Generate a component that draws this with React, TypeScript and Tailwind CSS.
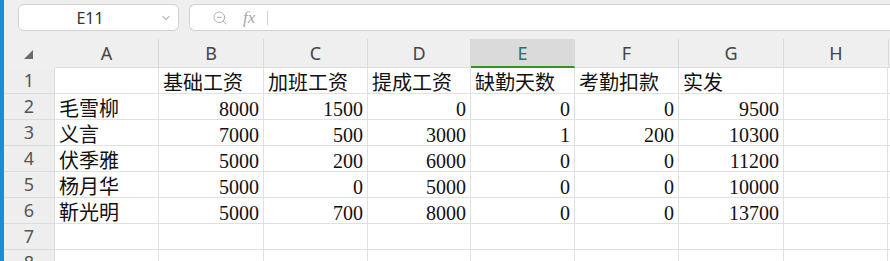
import React from 'react';
import { ChevronDown, ZoomOut } from 'lucide-react';

const colWidths = ['w-[104px]', 'w-[105px]', 'w-[104px]', 'w-[103px]', 'w-[104px]', 'w-[104px]', 'w-[105px]', 'w-[104px]'];
const letters = ['A', 'B', 'C', 'D', 'E', 'F', 'G', 'H'];

type Cell = string | number;

const rows: Cell[][] = [
  ['', '基础工资', '加班工资', '提成工资', '缺勤天数', '考勤扣款', '实发', ''],
  ['毛雪柳', 8000, 1500, 0, 0, 0, 9500, ''],
  ['义言', 7000, 500, 3000, 1, 200, 10300, ''],
  ['伏季雅', 5000, 200, 6000, 0, 0, 11200, ''],
  ['杨月华', 5000, 0, 5000, 0, 0, 10000, ''],
  ['靳光明', 5000, 700, 8000, 0, 0, 13700, ''],
  ['', '', '', '', '', '', '', ''],
  ['', '', '', '', '', '', '', ''],
];

const cellFont = { fontFamily: '"Liberation Serif", "Noto Sans CJK SC", serif' };
const uiFont = { fontFamily: '"Noto Sans", "Liberation Sans", sans-serif' };

const Toolbar: React.FC = () => (
  <div className="flex h-[39px] shrink-0 items-start pt-[4px] pl-[14px] gap-[10px]">
    <div className="relative flex h-[27px] w-[161px] items-center rounded-[6px] border border-[#d2d2d2] bg-white">
      <span className="w-[142px] text-center text-[16px] text-[#333]" style={uiFont}>E11</span>
      <ChevronDown className="absolute right-[6px] top-[7px] text-[#666]" size={12} strokeWidth={1.6} />
    </div>
    <div className="flex h-[27px] flex-1 items-center rounded-l-[6px] border border-r-0 border-[#d2d2d2] bg-white">
      <ZoomOut className="ml-[22px] text-[#a8a8a8]" size={16} strokeWidth={1.4} />
      <span className="ml-[15px] text-[17px] italic text-[#a8a8a8]" style={cellFont}>fx</span>
      <div className="ml-[12px] h-[14px] w-px bg-[#cfcfcf]" />
    </div>
  </div>
);

const HeaderRow: React.FC = () => (
  <div className="flex h-[29px] shrink-0">
    <div className="flex w-[51px] items-center justify-center">
      <svg width="9" height="9" viewBox="0 0 9 9" className="ml-[-3px] mt-[1px]">
        <polygon points="9,0 9,9 0,9" fill="#6b6b6b" />
      </svg>
    </div>
    {letters.map((l, i) => {
      const active = l === 'E';
      return (
        <div
          key={l}
          className={`${colWidths[i]} mt-0 flex items-center justify-center text-[18px] ${
            active
              ? 'border-b-2 border-b-[#3c8c2c] bg-[#dadada] text-[#157a6b]'
              : 'border-b border-b-[#dcdcdc] text-[#444]'
          } ${i < 7 ? 'border-r border-r-[#d9d9d9]' : ''}`}
          style={uiFont}
        >
          <span className={active ? 'mt-[1px]' : ''}>{l}</span>
        </div>
      );
    })}
    <div className="flex-1 border-b border-b-[#dcdcdc] border-l border-l-[#d9d9d9]" />
  </div>
);

const DataRow: React.FC<{ n: number; cells: Cell[] }> = ({ n, cells }) => (
  <div className="flex h-[26px] shrink-0">
    <div
      className="flex w-[51px] items-center justify-center border-b border-r border-[#dcdcdc] bg-[#eeeeee] text-[18px] text-[#555]"
      style={uiFont}
    >
      {n}
    </div>
    {cells.map((c, i) => (
      <div
        key={i}
        className={`${colWidths[i]} h-[26px] overflow-hidden whitespace-nowrap border-b border-r border-[#e1e1e1] bg-white px-[4px] pt-[5px] text-[20px] leading-[20px] text-[#111] ${
          typeof c === 'number' ? 'text-right' : 'text-left'
        }`}
        style={cellFont}
      >
        {c}
      </div>
    ))}
    <div className="flex-1 border-b border-[#e1e1e1] bg-white" />
  </div>
);

const App: React.FC = () => {
  return (
    <div className="flex h-[261px] w-[890px] overflow-hidden bg-[#efefef]">
      <div className="w-[4px] shrink-0 bg-[#1a8cd8]" />
      <div className="flex flex-1 flex-col">
        <Toolbar />
        <HeaderRow />
        {rows.map((r, i) => (
          <DataRow key={i} n={i + 1} cells={r} />
        ))}
      </div>
    </div>
  );
};

export default App;
